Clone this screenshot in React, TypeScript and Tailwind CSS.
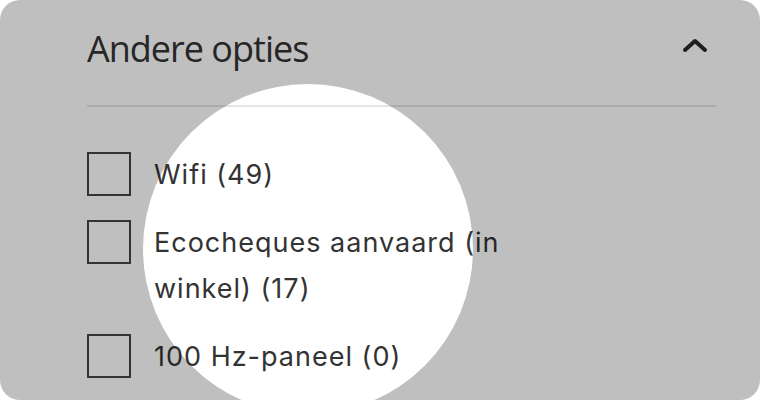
import React from "react";

const items = [
  { label: "Wifi (49)" },
  { label: "Ecocheques aanvaard (in winkel) (17)" },
  { label: "100 Hz-paneel (0)" },
];

export default function App() {
  return (
    <div className="w-[760px] h-[400px] bg-white">
      <div className="relative w-[760px] h-[400px] rounded-[20px] overflow-hidden bg-white">
        <div className="pl-[87px] pr-[44px] pt-[24px]">
          <div className="flex items-center justify-between h-[50px]">
            <h2
              className="text-[36px] leading-[50px] text-[#333] font-normal tracking-[-1px]"
              style={{ fontFamily: '"Open Sans", sans-serif' }}
            >
              Andere opties
            </h2>
            <svg width="28" height="18" viewBox="0 0 28 18" className="mr-[7px] mb-[8px]">
              <path d="M4 14 L14 5 L24 14" fill="none" stroke="#2a2a2a" strokeWidth="4" strokeLinecap="round" strokeLinejoin="round" />
            </svg>
          </div>
          <div className="mt-[31px] h-[2px] bg-[#e5e5e5]" />
          <div
            className="mt-[45px] flex flex-col gap-[22px] text-[27px] leading-[46px] tracking-[1px] text-[#333]"
            style={{ fontFamily: 'Inter, sans-serif' }}
          >
            {items.map((it) => (
              <div key={it.label} className="flex items-start gap-[23px]">
                <div className="w-[44px] h-[44px] border-2 border-[#444] shrink-0" />
                <span className="w-[380px]">{it.label}</span>
              </div>
            ))}
          </div>
        </div>
        <div
          className="absolute left-[143px] top-[84px] w-[330px] h-[330px] rounded-full pointer-events-none"
          style={{ boxShadow: "0 0 0 2000px rgba(0,0,0,0.25)" }}
        />
      </div>
    </div>
  );
}
